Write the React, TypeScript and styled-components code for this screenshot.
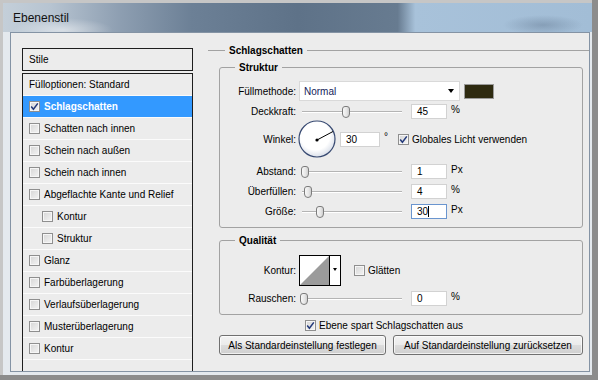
import React from 'react';
import styled, { createGlobalStyle } from 'styled-components';

const GlobalStyle = createGlobalStyle`
  html, body {
    margin: 0;
    padding: 0;
  }
  body {
    font-family: "Liberation Sans", Arial, sans-serif;
    font-size: 10px;
    color: #000;
    background: #c6c6c6;
  }
  * {
    box-sizing: border-box;
  }
`;

const Screen = styled.div`
  width: 598px;
  height: 380px;
  padding: 3px 0 0 3px;
  background: #c6c6c6;
  border-right: 6px solid #8c8c8c;
  border-bottom: 5px solid #8c8c8c;
  overflow: hidden;
`;

const Window = styled.div`
  width: 589px;
  height: 372px;
  display: flex;
  flex-direction: column;
  background: #e4e9ee;
`;

const TitleBar = styled.div`
  height: 29px;
  flex-shrink: 0;
  display: flex;
  align-items: center;
  padding: 1px 0 0 10px;
  background:
    radial-gradient(ellipse 50px 12px at 60px 27px, rgba(255, 255, 255, 0.5), transparent),
    radial-gradient(ellipse 40px 10px at 540px 22px, rgba(80, 100, 125, 0.35), transparent),
    linear-gradient(90deg, #c4cfd9 0%, #b7c4d1 8%, #8d9eb1 20%, #6c8096 32%, #5e7288 50%, #677b90 67%, #a8c2da 70%, #a2bdd6 100%);
`;

const Title = styled.div`
  font-size: 12px;
  color: #111;
`;

const Frame = styled.div`
  flex: 1;
  display: flex;
  padding: 0 2px 3px 7px;
`;

const Content = styled.div`
  flex: 1;
  display: flex;
  border: 1px solid #8493a4;
  background: #ececec;
`;

/* ---------- left list ---------- */

const Sidebar = styled.div`
  width: 171px;
  margin: 15px 0 0 11px;
  display: flex;
  flex-direction: column;
  gap: 2px;
`;

const StileBox = styled.div`
  height: 23px;
  border: 1px solid #1e1e1e;
  padding-left: 6px;
  line-height: 21px;
`;

const StyleList = styled.div`
  flex: 1;
  border: 1px solid #1e1e1e;
  border-bottom: none;
`;

const StyleItem = styled.div<{ $selected?: boolean; $indent?: boolean }>`
  height: 22px;
  display: flex;
  align-items: center;
  gap: 4px;
  padding-left: ${p => (p.$indent ? 19 : 6)}px;
  border-bottom: 1px solid #fbfbfb;
  background: ${p => (p.$selected ? '#3399ff' : 'transparent')};
  color: ${p => (p.$selected ? '#fff' : '#000')};
  font-weight: ${p => (p.$selected ? 'bold' : 'normal')};
`;

/* ---------- checkbox ---------- */

const Box = styled.span`
  width: 11px;
  height: 11px;
  flex-shrink: 0;
  display: inline-flex;
  align-items: center;
  justify-content: center;
  border: 1px solid #8f8f8f;
  background: linear-gradient(135deg, #d6d6d6 0%, #f4f4f4 100%);
  box-shadow: inset 0 0 0 1px #f6f6f6;
`;

const CheckBox = ({ checked }: { checked?: boolean }) => (
  <Box>
    {checked && (
      <svg width="9" height="9" viewBox="0 0 9 9">
        <path d="M1.2 4.6 L3.4 7.2 L7.8 1.4" fill="none" stroke="#23397a" strokeWidth="1.5" />
      </svg>
    )}
  </Box>
);

/* ---------- right panel ---------- */

const Panel = styled.div`
  flex: 1;
  margin-left: 15px;
  padding-top: 11px;
  display: flex;
  flex-direction: column;
`;

const SectionHeader = styled.div`
  display: flex;
  align-items: center;
  height: 13px;
  font-weight: bold;

  &::before {
    content: '';
    width: 17px;
    height: 1px;
    background: #a2a2a2;
  }

  &::after {
    content: '';
    flex: 1;
    height: 1px;
    background: #a2a2a2;
  }
`;

const HeaderText = styled.span`
  padding: 0 4px;
`;

const Group = styled.fieldset<{ $top: number }>`
  margin: ${p => p.$top}px 6px 0 11px;
  padding: 7px 0 8px 0;
  border: 1px solid #a2a2a2;
  border-radius: 3px;
  min-width: 0;
`;

const GroupTitle = styled.legend`
  margin-left: 15px;
  padding: 0 4px;
  font-weight: bold;
  line-height: 13px;
`;

const Row = styled.div<{ $h: number; $top?: number }>`
  display: flex;
  align-items: center;
  height: ${p => p.$h}px;
  margin-top: ${p => p.$top ?? 0}px;
`;

const Label = styled.div`
  width: 76px;
  flex-shrink: 0;
  text-align: right;
`;

const Select = styled.div`
  width: 161px;
  height: 20px;
  margin-left: 3px;
  padding: 0 5px 0 4px;
  display: flex;
  align-items: center;
  justify-content: space-between;
  background: #fff;
  border: 1px solid #d9d9d9;
  color: #14225a;
`;

const DownArrow = styled.span<{ $size: number }>`
  width: 0;
  height: 0;
  border-left: ${p => p.$size}px solid transparent;
  border-right: ${p => p.$size}px solid transparent;
  border-top: ${p => p.$size + 1}px solid #000;
`;

const Swatch = styled.div`
  width: 30px;
  height: 15px;
  margin-left: 4px;
  background: #2e2a10;
  border: 1px solid #9a9a9a;
`;

const SliderWrap = styled.div`
  position: relative;
  width: 102px;
  height: 12px;
  margin-left: 4px;
  flex-shrink: 0;
`;

const Track = styled.div`
  margin: 5px 0 0 2px;
  height: 2px;
  border-top: 1px solid #b4b4b4;
  border-bottom: 1px solid #ffffff;
`;

const Thumb = styled.div`
  position: absolute;
  top: 0;
  width: 8px;
  height: 12px;
  border: 1px solid #7c7c7c;
  border-radius: 3px 3px 4px 4px;
  background: linear-gradient(90deg, #f8f8f8 0%, #e6e6e6 60%, #cfcfcf 100%);
`;

const Slider = ({ pos }: { pos: number }) => (
  <SliderWrap>
    <Track />
    <Thumb style={{ left: Math.round(pos * 94) }} />
  </SliderWrap>
);

const Field = styled.div<{ $w: number; $left: number; $focus?: boolean }>`
  width: ${p => p.$w}px;
  height: 15px;
  margin-left: ${p => p.$left}px;
  padding-left: 5px;
  display: flex;
  align-items: center;
  flex-shrink: 0;
  background: #fff;
  border: 1px solid ${p => (p.$focus ? '#6a95cf' : '#d2d2d2')};
`;

const Caret = styled.span`
  width: 1px;
  height: 11px;
  background: #000;
`;

const Unit = styled.span`
  margin: 0 0 4px 4px;
  line-height: 12px;
`;

const DialWrap = styled.div`
  width: 38px;
  height: 38px;
  margin-left: 2px;
  flex-shrink: 0;
`;

const Dial = () => (
  <DialWrap>
    <svg width="38" height="38" viewBox="0 0 38 38">
      <defs>
        <radialGradient id="dialFill" cx="45%" cy="40%" r="62%">
          <stop offset="65%" stopColor="#ffffff" />
          <stop offset="100%" stopColor="#d7dde8" />
        </radialGradient>
      </defs>
      <circle cx="19" cy="19" r="18" fill="url(#dialFill)" stroke="#384a72" strokeWidth="1.2" />
      <line x1="19" y1="20" x2="35" y2="11.5" stroke="#000" strokeWidth="1" />
      <circle cx="19" cy="20" r="1.6" fill="#000" />
    </svg>
  </DialWrap>
);

const CheckLabel = styled.label<{ $left: number }>`
  display: flex;
  align-items: center;
  gap: 3px;
  margin-left: ${p => p.$left}px;
`;

const ContourBox = styled.div`
  width: 42px;
  height: 31px;
  margin-left: 3px;
  display: flex;
  border: 1px solid #000;
  background: #fff;
`;

const ContourArrow = styled.div`
  flex: 1;
  display: flex;
  justify-content: center;
  padding-top: 12px;
  border-left: 1px solid #000;
`;

const CenterRow = styled.div`
  display: flex;
  margin: 5px 0 0 97px;
`;

const ButtonRow = styled.div`
  display: flex;
  gap: 7px;
  margin: 4px 0 0 11px;
`;

const Button = styled.button<{ $w: number }>`
  width: ${p => p.$w}px;
  height: 20px;
  padding: 0;
  font: inherit;
  color: #000;
  border: 1px solid #707070;
  border-radius: 3px;
  background: linear-gradient(180deg, #f3f3f3 0%, #ebebeb 50%, #dddddd 50%, #cfcfcf 100%);
  box-shadow: inset 0 0 0 1px rgba(255, 255, 255, 0.7);
`;

const styleItems = [
  { label: 'Schlagschatten', checked: true, selected: true },
  { label: 'Schatten nach innen' },
  { label: 'Schein nach außen' },
  { label: 'Schein nach innen' },
  { label: 'Abgeflachte Kante und Relief' },
  { label: 'Kontur', indent: true },
  { label: 'Struktur', indent: true },
  { label: 'Glanz' },
  { label: 'Farbüberlagerung' },
  { label: 'Verlaufsüberlagerung' },
  { label: 'Musterüberlagerung' },
  { label: 'Kontur' },
];

const sizeRows = [
  { label: 'Abstand:', value: '1', unit: 'Px', pos: 0.01 },
  { label: 'Überfüllen:', value: '4', unit: '%', pos: 0.04 },
  { label: 'Größe:', value: '30', unit: 'Px', pos: 0.17, focus: true },
];

const App = () => {
  return (
    <>
      <GlobalStyle />
      <Screen>
        <Window>
          <TitleBar>
            <Title>Ebenenstil</Title>
          </TitleBar>
          <Frame>
            <Content>
              <Sidebar>
                <StileBox>Stile</StileBox>
                <StyleList>
                  <StyleItem>Fülloptionen: Standard</StyleItem>
                  {styleItems.map((item, i) => (
                    <StyleItem key={i} $selected={item.selected} $indent={item.indent}>
                      <CheckBox checked={item.checked} />
                      {item.label}
                    </StyleItem>
                  ))}
                </StyleList>
              </Sidebar>

              <Panel>
                <SectionHeader>
                  <HeaderText>Schlagschatten</HeaderText>
                </SectionHeader>

                <Group $top={4}>
                  <GroupTitle>Struktur</GroupTitle>
                  <Row $h={20}>
                    <Label>Füllmethode:</Label>
                    <Select>
                      Normal
                      <DownArrow $size={3} />
                    </Select>
                    <Swatch />
                  </Row>
                  <Row $h={15} $top={3}>
                    <Label>Deckkraft:</Label>
                    <Slider pos={0.45} />
                    <Field $w={36} $left={9}>45</Field>
                    <Unit>%</Unit>
                  </Row>
                  <Row $h={38} $top={1}>
                    <Label>Winkel:</Label>
                    <Dial />
                    <Field $w={40} $left={4}>30</Field>
                    <Unit>°</Unit>
                    <CheckLabel $left={10}>
                      <CheckBox checked />
                      Globales Licht verwenden
                    </CheckLabel>
                  </Row>
                  {sizeRows.map((r, i) => (
                    <Row key={r.label} $h={15} $top={i === 0 ? 6 : 5}>
                      <Label>{r.label}</Label>
                      <Slider pos={r.pos} />
                      <Field $w={36} $left={9} $focus={r.focus}>
                        {r.value}
                        {r.focus && <Caret />}
                      </Field>
                      <Unit>{r.unit}</Unit>
                    </Row>
                  ))}
                </Group>

                <Group $top={6}>
                  <GroupTitle>Qualität</GroupTitle>
                  <Row $h={31} $top={1}>
                    <Label>Kontur:</Label>
                    <ContourBox>
                      <svg width="29" height="29" viewBox="0 0 29 29">
                        <polygon points="0,29 29,0 29,29" fill="#9b9b9b" />
                      </svg>
                      <ContourArrow>
                        <DownArrow $size={2} />
                      </ContourArrow>
                    </ContourBox>
                    <CheckLabel $left={13}>
                      <CheckBox />
                      Glätten
                    </CheckLabel>
                  </Row>
                  <Row $h={15} $top={5}>
                    <Label>Rauschen:</Label>
                    <Slider pos={0} />
                    <Field $w={36} $left={9}>0</Field>
                    <Unit>%</Unit>
                  </Row>
                </Group>

                <CenterRow>
                  <CheckLabel $left={0}>
                    <CheckBox checked />
                    Ebene spart Schlagschatten aus
                  </CheckLabel>
                </CenterRow>

                <ButtonRow>
                  <Button $w={167}>Als Standardeinstellung festlegen</Button>
                  <Button $w={190}>Auf Standardeinstellung zurücksetzen</Button>
                </ButtonRow>
              </Panel>
            </Content>
          </Frame>
        </Window>
      </Screen>
    </>
  );
};

export default App;
